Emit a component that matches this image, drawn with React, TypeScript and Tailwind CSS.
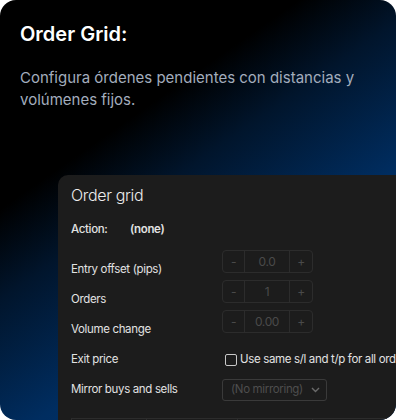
import React from 'react';

const steppers = [
  { label: 'Entry offset (pips)', value: '0.0' },
  { label: 'Orders', value: '1' },
  { label: 'Volume change', value: '0.00' },
];

const Stepper: React.FC<{ value: string }> = ({ value }) => (
  <div className="flex h-[23px] w-[91px] rounded-[4px] border border-[#2c2c2c] text-[12px] text-[#4a4a4a]">
    <div className="flex w-[22px] items-center justify-center border-r border-[#2c2c2c]">-</div>
    <div className="flex flex-1 items-center justify-center border-r border-[#2c2c2c]">{value}</div>
    <div className="flex w-[22px] items-center justify-center">+</div>
  </div>
);

export default function App() {
  return (
    <div className="h-[420px] w-[396px] bg-white">
      <div
        className="flex h-[420px] w-[396px] flex-col overflow-hidden rounded-[16px] bg-[linear-gradient(145deg,#000000_30%,#01152c_43%,#002d60_64%,#003a7c_100%)]"
        style={{ fontFamily: 'Inter, "Noto Sans", sans-serif' }}
      >
        <div className="px-5 pt-[20px]">
          <h1 className="text-[20px] font-semibold leading-[28px] text-white">Order Grid:</h1>
          <p className="mt-[19px] text-[15px] leading-[22px] text-[#a3adbd]">
            Configura órdenes pendientes con distancias y volúmenes fijos.
          </p>
        </div>

        <div className="ml-[58px] mt-[64px] w-[400px] flex-1 rounded-tl-[10px] bg-[#1c1c1c] pl-[13px] pt-[8px] text-[11.5px] tracking-[-0.03em] text-[#e2e2e2]">
          <div className="text-[16px] font-light leading-[24px] text-[#ececec]">Order grid</div>
          <div className="mt-[13px] flex h-[20px] items-center font-medium">
            <span className="w-[59px]">Action:</span>
            <span className="font-semibold">(none)</span>
          </div>
          <div className="mt-[10px]">
            {steppers.map((s) => (
              <div key={s.label} className="flex h-[30px] items-start">
                <span className="mt-[4px] w-[151px] leading-[30px]">{s.label}</span>
                <Stepper value={s.value} />
              </div>
            ))}
            <div className="mt-[5px] flex h-[30px] items-center">
              <span className="w-[154px]">Exit price</span>
              <span className="mr-[3px] h-[12px] w-[12px] rounded-[2px] border border-[#c8c8c8]" />
              <span className="whitespace-nowrap">Use same s/l and t/p for all orders</span>
            </div>
            <div className="flex h-[30px] items-center">
              <span className="w-[151px]">Mirror buys and sells</span>
              <div className="flex h-[22px] w-[105px] items-center justify-between whitespace-nowrap rounded-[3px] border border-[#3a3a3a] pl-[8px] pr-[6px] text-[#4e4e4e]">
                <span>(No mirroring)</span>
                <svg width="9" height="6" viewBox="0 0 9 6" fill="none">
                  <path d="M1 1l3.5 3.5L8 1" stroke="#6a6a6a" strokeWidth="1.4" />
                </svg>
              </div>
            </div>
          </div>
          <div className="mt-[13px] flex h-[20px] border-l border-t border-[#2c2c2c]">
            <div className="w-[75px] border-r border-[#2c2c2c]" />
            <div className="w-[91px] border-r border-[#2c2c2c]" />
            <div className="w-[75px] border-r border-[#2c2c2c]" />
            <div className="flex-1" />
          </div>
        </div>
      </div>
    </div>
  );
}
